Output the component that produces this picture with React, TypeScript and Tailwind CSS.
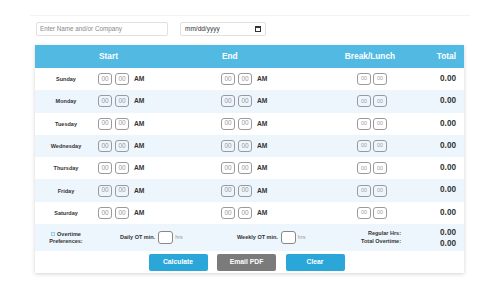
const days = ["Sunday", "Monday", "Tuesday", "Wednesday", "Thursday", "Friday", "Saturday"];

function TimeBox({ light }: { light?: boolean }) {
  return (
    <div
      className={
        "w-[14px] h-[12px] rounded-[3px] border border-[#9a9a9a] flex items-center justify-center leading-none " +
        (light ? "text-[5.5px] text-[#a0a0a0]" : "text-[6.5px] text-[#999]")
      }
    >
      00
    </div>
  );
}

function TimePair({ ampm }: { ampm: boolean }) {
  return (
    <div className="flex items-center">
      <TimeBox />
      <div className="w-[3px]" />
      <TimeBox />
      {ampm && <span className="ml-[5px] text-[6.7px] font-bold text-[#333]">AM</span>}
    </div>
  );
}

function Btn({ label, color }: { label: string; color: string }) {
  return (
    <button className={"w-[59px] h-[17px] rounded-[2px] text-white text-[6.8px] font-bold " + color}>{label}</button>
  );
}

export default function App() {
  return (
    <div className="w-[500px] h-[300px] bg-white font-['Liberation_Sans',Arial,sans-serif] text-[#333]">
      <div className="h-[15px]" />
      <div className="mx-[30px] border-t border-[#f3f3f3]" />
      <div className="w-[429px] ml-[35px]">
        <div className="flex items-center h-[14px] mt-[6px] mb-[9px]">
          <div className="ml-[1px] w-[132px] h-[14px] border border-[#e0e0e0] rounded-[2px] flex items-center pl-[3px] text-[6.3px] text-[#888]">
            Enter Name and/or Company
          </div>
          <div className="ml-[12px] w-[86px] h-[14px] border border-[#e0e0e0] rounded-[2px] flex items-center pl-[4px] pr-[4px] text-[6.5px] text-[#333]">
            <span className="flex-1">mm/dd/yyyy</span>
            <svg width="6" height="6" viewBox="0 0 6 6">
              <rect x="0.5" y="0.5" width="5" height="5" fill="none" stroke="#333" strokeWidth="1" />
              <rect x="0.5" y="0.5" width="5" height="1.5" fill="#333" />
            </svg>
          </div>
        </div>

        <div className="shadow-[0_1px_4px_rgba(0,0,0,0.18)] bg-white">
          <div className="flex items-center h-[23px] bg-[#52b9e3] text-white text-[8.3px] font-bold">
            <div className="w-[62px]" />
            <div className="w-[123px] pl-[2px]">Start</div>
            <div className="w-[110px] pl-[2px]">End</div>
            <div className="w-[80px] text-center">Break/Lunch</div>
            <div className="flex-1 text-right pr-[8px]">Total</div>
          </div>

          {days.map((d, i) => (
            <div key={d} className={"flex items-center h-[22.3px] " + (i % 2 === 1 ? "bg-[#eef6fd]" : "bg-white")}>
              <div className="w-[62px] text-center text-[5.5px] font-bold">{d}</div>
              <div className="w-[123px] pl-[1px]">
                <TimePair ampm />
              </div>
              <div className="w-[110px] pl-[1px]">
                <TimePair ampm />
              </div>
              <div className="w-[80px] flex justify-center pl-[4px]">
                <div className="flex items-center gap-[2px]">
                  <TimeBox light />
                  <TimeBox light />
                </div>
              </div>
              <div className="flex-1 text-right pr-[8px] text-[8.2px] font-bold">0.00</div>
            </div>
          ))}

          <div className="flex items-center h-[27px] bg-[#eef6fd] text-[5.5px] font-bold">
            <div className="w-[62px] text-center leading-[7px]">
              <div className="flex items-center justify-center">
                <span className="w-[4px] h-[4px] border border-[#8fd0ec] mr-[2px]" />
                Overtime
              </div>
              <div>Preferences:</div>
            </div>
            <div className="w-[123px] pl-[23px] flex items-center">
              <span>Daily OT min.</span>
              <div className="ml-[3px] w-[15px] h-[13px] rounded-[3px] border border-[#888] bg-white" />
              <span className="ml-[2px] font-normal text-[#999]">hrs</span>
            </div>
            <div className="w-[110px] pl-[17px] flex items-center">
              <span>Weekly OT min.</span>
              <div className="ml-[3px] w-[15px] h-[13px] rounded-[3px] border border-[#888] bg-white" />
              <span className="ml-[2px] font-normal text-[#999]">hrs</span>
            </div>
            <div className="w-[80px] text-right pr-[9px] leading-[7.5px]">
              <div>Regular Hrs:</div>
              <div>Total Overtime:</div>
            </div>
            <div className="flex-1 text-right pr-[8px] text-[8.2px] leading-[11px]">
              <div>0.00</div>
              <div>0.00</div>
            </div>
          </div>

          <div className="flex justify-center gap-[9.5px] pt-[3px] pb-[2px] pr-[6px]">
            <Btn label="Calculate" color="bg-[#2ba6d9]" />
            <Btn label="Email PDF" color="bg-[#7b7b7b]" />
            <Btn label="Clear" color="bg-[#2ba6d9]" />
          </div>
        </div>
      </div>
    </div>
  );
}
